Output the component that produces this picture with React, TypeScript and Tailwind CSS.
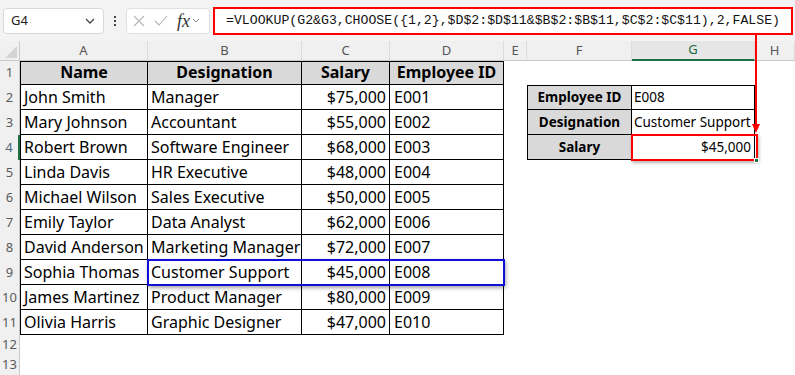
import React from "react";

const COLS = [20, 128, 154, 88, 114, 23, 105, 123, 40];
const LETTERS = ["A", "B", "C", "D", "E", "F", "G", "H"];

const people: [string, string, string, string][] = [
  ["John Smith", "Manager", "$75,000", "E001"],
  ["Mary Johnson", "Accountant", "$55,000", "E002"],
  ["Robert Brown", "Software Engineer", "$68,000", "E003"],
  ["Linda Davis", "HR Executive", "$48,000", "E004"],
  ["Michael Wilson", "Sales Executive", "$50,000", "E005"],
  ["Emily Taylor", "Data Analyst", "$62,000", "E006"],
  ["David Anderson", "Marketing Manager", "$72,000", "E007"],
  ["Sophia Thomas", "Customer Support", "$45,000", "E008"],
  ["James Martinez", "Product Manager", "$80,000", "E009"],
  ["Olivia Harris", "Graphic Designer", "$47,000", "E010"],
];

const lookup: Record<number, [string, string, boolean]> = {
  2: ["Employee ID", "E008", false],
  3: ["Designation", "Customer Support", false],
  4: ["Salary", "$45,000", true],
};

type CellProps = {
  w: number;
  className?: string;
  children?: React.ReactNode;
};

function Cell({ w, className = "", children }: CellProps) {
  return (
    <div style={{ width: w }} className={`box-border h-full flex items-end overflow-hidden whitespace-nowrap ${className}`}>
      {children}
    </div>
  );
}

function FormulaBar() {
  return (
    <div className="h-[41px] bg-[#f3f3f3] flex items-center pl-[3px] font-['Noto_Sans',sans-serif]">
      <div className="w-[101px] h-[26px] bg-white border border-[#d9d9d9] rounded-[4px] flex items-center justify-between pl-[7px] pr-[8px] text-[13px] text-[#222]">
        <span>G4</span>
        <svg width="10" height="6" viewBox="0 0 10 6" fill="none" stroke="#444" strokeWidth="1.3">
          <path d="M1 1l4 4 4-4" />
        </svg>
      </div>
      <div className="w-[22px] flex flex-col items-center gap-[2px]">
        <span className="w-[2px] h-[2px] bg-[#444]" />
        <span className="w-[2px] h-[2px] bg-[#444]" />
        <span className="w-[2px] h-[2px] bg-[#444]" />
      </div>
      <div className="w-[84px] h-[26px] bg-white border border-[#e0e0e0] rounded-[4px] flex items-center pl-[6px] gap-[9px]">
        <svg width="12" height="12" viewBox="0 0 12 12" stroke="#b5b5b5" strokeWidth="1.1">
          <path d="M1 1l10 10M11 1L1 11" />
        </svg>
        <svg width="14" height="11" viewBox="0 0 14 11" fill="none" stroke="#b5b5b5" strokeWidth="1.1">
          <path d="M1 6l4 4 8-9" />
        </svg>
        <span className="flex items-center gap-[2px]">
          <span className="font-['Liberation_Serif',serif] italic text-[18px] text-[#333] leading-none">fx</span>
          <svg width="8" height="5" viewBox="0 0 8 5" fill="none" stroke="#888" strokeWidth="1">
            <path d="M1 1l3 3 3-3" />
          </svg>
        </span>
      </div>
      <div className="ml-[3px] w-[580px] h-[28px] bg-white border-[2.5px] border-[#ff0000] flex items-center pl-[11px] font-['Liberation_Mono',monospace] text-[13.2px] text-[#111] whitespace-nowrap">
        =VLOOKUP(G2&amp;G3,CHOOSE({"{"}1,2{"}"},$D$2:$D$11&amp;$B$2:$B$11,$C$2:$C$11),2,FALSE)
      </div>
    </div>
  );
}

function HeaderRow() {
  return (
    <div className="h-[20px] flex bg-[#f0f0f0] text-[13px] text-[#555] font-['Noto_Sans',sans-serif]">
      <div style={{ width: COLS[0] }} className="box-border h-full border-r border-b border-[#c9c9c9] relative">
        <div className="absolute right-[2px] bottom-[2px] w-0 h-0 border-l-[12px] border-l-transparent border-b-[12px] border-b-[#d4d4d4]" />
      </div>
      {LETTERS.map((l, i) => (
        <div
          key={l}
          style={{ width: COLS[i + 1] }}
          className={`box-border h-full flex items-center justify-center border-r border-[#dcdcdc] ${
            l === "G" ? "border-b-2 border-b-[#1e7145] bg-[#e6e6e6] text-[#1e6b40]" : "border-b border-b-[#c9c9c9]"
          }`}
        >
          {l}
        </div>
      ))}
    </div>
  );
}

function RowHeader({ n }: { n: number }) {
  const sel = n === 4;
  return (
    <div
      style={{ width: COLS[0] }}
      className={`box-border h-full flex items-center justify-center bg-[#f0f0f0] text-[13px] ${
        sel ? "border-r-2 border-[#1e7145] text-[#4a6a80] bg-[#e6e6e6]" : "border-r border-[#c9c9c9] text-[#5a5a5a]"
      }`}
    >
      {n}
    </div>
  );
}

function SheetRow({ n }: { n: number }) {
  const h = n === 1 ? 24 : n <= 11 ? 25 : 20;
  const inTable = n >= 1 && n <= 11;
  const tb = "border-black border-r border-b";
  const top = n === 1 ? "border-t" : "";
  const head = "bg-[#d9d9d9] font-bold justify-center";
  const p = n >= 2 && n <= 11 ? people[n - 2] : null;
  const lk = lookup[n];
  return (
    <div style={{ height: h }} className="flex text-[16px] text-black">
      <RowHeader n={n} />
      {inTable ? (
        n === 1 ? (
          <>
            <Cell w={COLS[1]} className={`${tb} ${top} border-l ${head}`}>Name</Cell>
            <Cell w={COLS[2]} className={`${tb} ${top} ${head}`}>Designation</Cell>
            <Cell w={COLS[3]} className={`${tb} ${top} ${head}`}>Salary</Cell>
            <Cell w={COLS[4]} className={`${tb} ${top} ${head}`}>Employee ID</Cell>
          </>
        ) : (
          <>
            <Cell w={COLS[1]} className={`${tb} border-l pl-[3px]`}>{p![0]}</Cell>
            <Cell w={COLS[2]} className={`${tb} pl-[3px]`}>{p![1]}</Cell>
            <Cell w={COLS[3]} className={`${tb} justify-end pr-[3px]`}>{p![2]}</Cell>
            <Cell w={COLS[4]} className={`${tb} pl-[4px]`}>{p![3]}</Cell>
          </>
        )
      ) : (
        <>
          <Cell w={COLS[1]} />
          <Cell w={COLS[2]} />
          <Cell w={COLS[3]} />
          <Cell w={COLS[4]} />
        </>
      )}
      <Cell w={COLS[5]} />
      {lk ? (
        <>
          <Cell w={COLS[6]} className={`${tb} border-l ${n === 2 ? "border-t" : ""} ${head} text-[13.5px] pb-[2px]`}>
            {lk[0]}
          </Cell>
          <Cell
            w={COLS[7]}
            className={`${tb} ${n === 2 ? "border-t" : ""} text-[13.5px] pb-[2px] ${lk[2] ? "justify-end pr-[3px]" : "pl-[2px]"}`}
          >
            {lk[1]}
          </Cell>
        </>
      ) : (
        <>
          <Cell w={COLS[6]} />
          <Cell w={COLS[7]} />
        </>
      )}
      <Cell w={COLS[8]} />
    </div>
  );
}

export default function App() {
  const rows = Array.from({ length: 13 }, (_, i) => i + 1);
  return (
    <div className="relative w-[795px] h-[375px] overflow-hidden bg-white">
      <FormulaBar />
      <HeaderRow />
      <div className="font-['Noto_Sans',sans-serif]">
        {rows.map((n) => (
          <SheetRow key={n} n={n} />
        ))}
      </div>

      {/* selection on row 9 */}
      <div className="absolute left-[147px] top-[259px] w-[358px] h-[27px] border-[2.5px] border-[#1010d8] shadow-[1px_2px_4px_rgba(0,0,0,0.35)] pointer-events-none" />

      {/* red callout from formula to G4 */}
      <div className="absolute left-[755px] top-[35px] w-[2px] h-[90px] bg-[#ff0000]" />
      <div className="absolute left-[752px] top-[124px] w-0 h-0 border-l-[4px] border-l-transparent border-r-[4px] border-r-transparent border-t-[9px] border-t-[#ff0000]" />
      <div className="absolute left-[631px] top-[134px] w-[127px] h-[27px] border-[2.5px] border-[#ff0000] shadow-[1px_2px_3px_rgba(0,0,0,0.3)]" />
      <div className="absolute left-[754px] top-[158px] w-[5px] h-[5px] bg-[#1e7145] border border-white" />
    </div>
  );
}
